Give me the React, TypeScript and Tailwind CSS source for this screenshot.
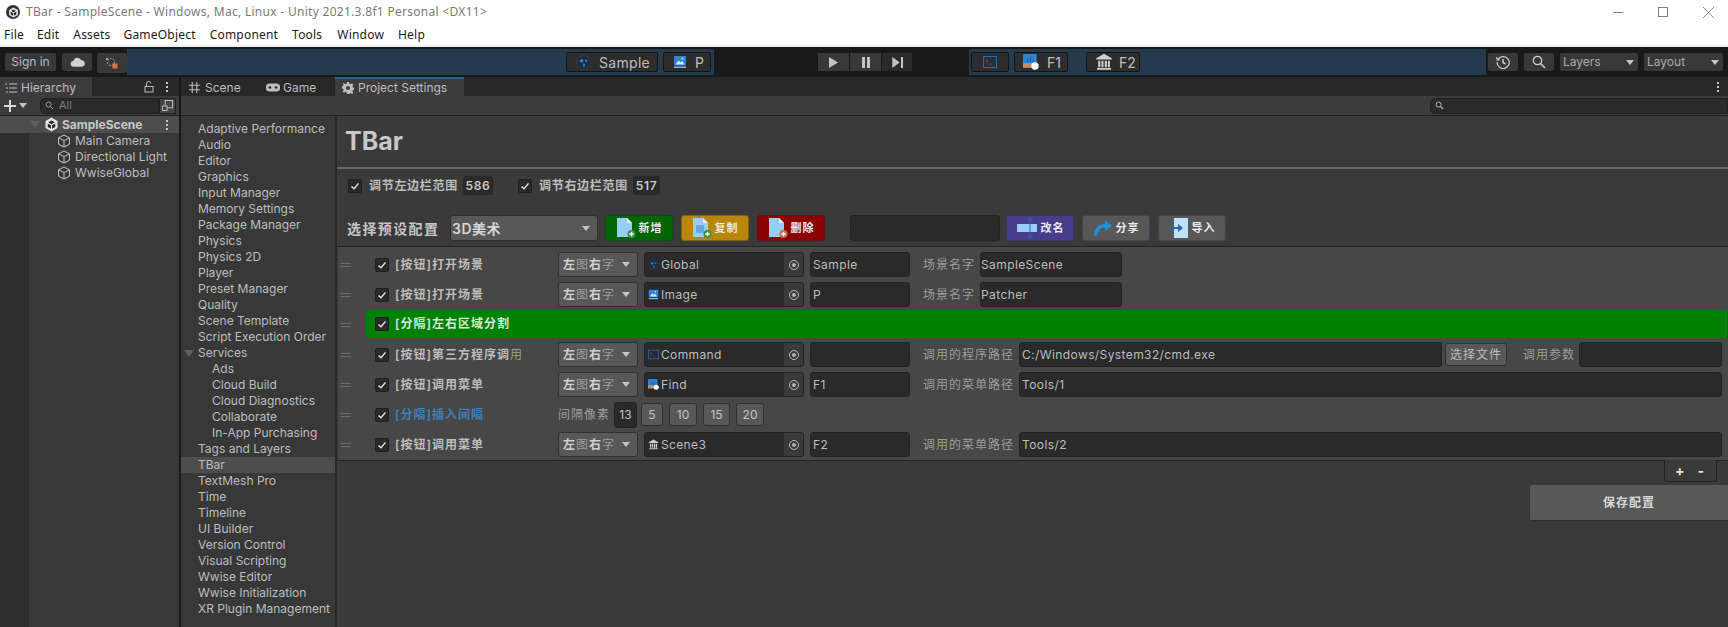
import React from "react";

const FONT = "font-['Inter','Noto_Sans_CJK_SC',sans-serif]";

function Cube({ className = "" }: { className?: string }) {
  return (
    <svg viewBox="0 0 14 14" className={`w-[14px] h-[14px] ${className}`} fill="none" stroke="#c4c4c4" strokeWidth="1">
      <path d="M7 1 L12.5 3.8 V10.2 L7 13 L1.5 10.2 V3.8 Z M1.5 3.8 L7 6.6 L12.5 3.8 M7 6.6 V13" />
    </svg>
  );
}

function UnityLogo({ size = 14 }: { size?: number }) {
  return (
    <svg viewBox="0 0 14 14" width={size} height={size}>
      <path d="M7 .5 12.6 3.7v6.6L7 13.5 1.4 10.3V3.7Z" fill="#e4e4e4" />
      <path d="M7 3.2 4 5 7 6.8 10 5ZM3.5 6v3.4L6.5 11V7.7ZM10.5 6v3.4L7.5 11V7.7Z" fill="#2a2a2a" />
    </svg>
  );
}

function Globe({ size = 14 }: { size?: number }) {
  return (
    <svg viewBox="0 0 14 14" width={size} height={size}>
      <circle cx="7" cy="7" r="6.5" fill="#1e2c3a" stroke="#3b3b3b" />
      <path d="M3.5 5 6 3.5 7 5.5 5.5 7.5 4 6.5ZM8.5 3.5 11 5.5 10 7 8.5 6ZM6.5 8 8.5 8.5 8 11.5 6.8 11Z" fill="#2a7fd6" />
    </svg>
  );
}

function ImageIcon({ size = 14 }: { size?: number }) {
  return (
    <svg viewBox="0 0 14 14" width={size} height={size}>
      <rect x="1" y="1" width="12" height="9.5" fill="#2f83d8" />
      <path d="M2.5 9.5 5.5 5.5 7.5 7.5 9 6 11.5 9.5Z" fill="#d9ecfb" />
      <circle cx="9.5" cy="3.5" r="1" fill="#d9ecfb" />
      <rect x="1" y="11.5" width="12" height="1.5" fill="#7fb6ea" />
    </svg>
  );
}

function Terminal({ size = 14 }: { size?: number }) {
  return (
    <svg viewBox="0 0 14 14" width={size} height={size} fill="none" stroke="#2467b5" strokeWidth="1">
      <rect x=".5" y="1.5" width="13" height="11" />
      <path d="M3 4.5 5 6.2 3 8M6.5 9h2" />
    </svg>
  );
}

function FindIcon({ size = 14 }: { size?: number }) {
  return (
    <svg viewBox="0 0 14 14" width={size} height={size}>
      <rect x="0" y="0" width="12" height="12" rx="1" fill="#2f83d8" />
      <rect x="0" y="8" width="12" height="4" fill="#c98a5e" />
      <path d="M4 7V4M6.5 7V2.5M9 7V5" stroke="#1b5a9e" />
      <circle cx="10.5" cy="10.5" r="3.2" fill="#ffffff" />
    </svg>
  );
}

function Bank({ size = 14 }: { size?: number }) {
  return (
    <svg viewBox="0 0 14 14" width={size} height={size} fill="#cfcfcf">
      <path d="M7 .5 13 4v1H1V4Z" />
      <path d="M2.5 6h1.6v5H2.5ZM5 6h1.6v5H5ZM7.6 6h1.6v5H7.6ZM10 6h1.6v5H10ZM1.5 11.7h11V13h-11Z" />
    </svg>
  );
}

function Check({ className = "" }: { className?: string }) {
  return (
    <span className={`w-[14px] h-[14px] shrink-0 flex items-center justify-center rounded-[2px] bg-[#2a2a2a] border border-[#1f1f1f] ${className}`}>
      <svg viewBox="0 0 10 10" className="w-[10px] h-[10px]" fill="none" stroke="#e4e4e4" strokeWidth="1.4">
        <path d="M1.5 5.5 4 7.8 8.5 2.4" />
      </svg>
    </span>
  );
}

function DocIcon({ badge, overlay }: { badge: string; overlay?: boolean }) {
  return (
    <svg viewBox="0 0 20 22" className="w-[20px] h-[22px] shrink-0">
      <path d="M1 1H11L16 6V20H1Z" fill="#99ccf7" />
      <path d="M11 1 16 6H11Z" fill="#e3f1fd" />
      {overlay && <rect x="4" y="8" width="8" height="8" fill="#6da6de" />}
      <circle cx="15.5" cy="17" r="4" fill={badge} />
      <path d="M13.2 17h4.6M15.5 14.8v4.4" stroke="#eef7ee" strokeWidth="1.5" />
    </svg>
  );
}

function ActionBtn({ bg, icon, label }: { bg: string; icon: React.ReactNode; label: string }) {
  return (
    <div className={`w-[68px] h-[26px] rounded-[3px] flex items-center justify-center gap-[3px] text-[11px] font-bold text-[#e8e8e8] border border-[#2a2a2a]/40 ${bg}`}>
      {icon}
      <span className="tracking-[1px]">{label}</span>
    </div>
  );
}

function Dots({ className = "" }: { className?: string }) {
  return (
    <span className={`flex flex-col gap-[2px] w-[2px] shrink-0 ${className}`}>
      <i className="block w-[2px] h-[2px] bg-[#c4c4c4]" />
      <i className="block w-[2px] h-[2px] bg-[#c4c4c4]" />
      <i className="block w-[2px] h-[2px] bg-[#c4c4c4]" />
    </span>
  );
}

function Arrow({ className = "" }: { className?: string }) {
  return <span className={`w-0 h-0 border-l-[4px] border-r-[4px] border-t-[5px] border-l-transparent border-r-transparent border-t-[#c4c4c4] shrink-0 ${className}`} />;
}

function TreeArrow({ className = "" }: { className?: string }) {
  return <span className={`w-0 h-0 border-l-[5px] border-r-[5px] border-t-[7px] border-l-transparent border-r-transparent border-t-[#5f5f5f] shrink-0 ${className}`} />;
}

function Handle() {
  return (
    <span className="w-[10px] ml-[3px] flex flex-col gap-[2px] shrink-0">
      <i className="block h-px bg-[#6a6a6a]" />
      <i className="block h-px bg-[#6a6a6a]" />
    </span>
  );
}

function Layout() {
  return (
    <div className="w-[80px] ml-[1px] h-[25px] shrink-0 rounded-[3px] bg-[#585858] border border-[#303030] flex items-center pl-[4px] pr-[7px] justify-between text-[12px] text-[#9c9c9c] tracking-[1px]">
      <span>
        <b className="font-semibold text-[#d0d0d0]">左</b>图<b className="font-semibold text-[#d0d0d0]">右</b>字
      </span>
      <Arrow />
    </div>
  );
}

function ObjField({ icon, name }: { icon: React.ReactNode; name: string }) {
  return (
    <div className="w-[160px] ml-[6px] h-[25px] shrink-0 rounded-[3px] bg-[#2a2a2a] border border-[#232323] flex items-center text-[12px] text-[#bdbdbd] overflow-hidden">
      <span className="w-[11px] ml-[3px] flex items-center justify-center shrink-0">{icon}</span>
      <span className="ml-[2px] flex-1 tracking-[0.35px]">{name}</span>
      <span className="w-[19px] h-full bg-[#3a3a3a] flex items-center justify-center shrink-0">
        <span className="w-[10px] h-[10px] rounded-full border border-[#b4b4b4] flex items-center justify-center">
          <i className="block w-[4px] h-[4px] rounded-full bg-[#b4b4b4]" />
        </span>
      </span>
    </div>
  );
}

function Input({ className, value = "" }: { className: string; value?: string }) {
  return (
    <div className={`h-[25px] shrink-0 rounded-[3px] bg-[#2a2a2a] border border-[#232323] flex items-center text-[12px] text-[#bdbdbd] tracking-[0.4px] ${className}`}>
      {value}
    </div>
  );
}

function RowLabel({ children, blue }: { children: React.ReactNode; blue?: boolean }) {
  return (
    <span className={`w-[162px] ml-[6px] shrink-0 text-[12px] font-semibold tracking-[1px] whitespace-nowrap ${blue ? "text-[#3f7fb5]" : "text-[#bcbcbc]"}`}>
      {children}
    </span>
  );
}

function SideLabel({ className, children }: { className: string; children: string }) {
  return <span className={`shrink-0 text-[12px] leading-[25px] text-[#9c9c9c] tracking-[1px] whitespace-nowrap ${className}`}>{children}</span>;
}

function Row({ children }: { children: React.ReactNode }) {
  return <div className="h-[30px] flex items-start pt-[2px]">{children}</div>;
}

function Lead({ label, blue }: { label: React.ReactNode; blue?: boolean }) {
  return (
    <div className="flex items-center h-[25px]">
      <Handle />
      <span className="w-[24px] shrink-0" />
      <Check />
      <RowLabel blue={blue}>{label}</RowLabel>
    </div>
  );
}

function GapBtn({ w, ml, t }: { w: string; ml: string; t: string }) {
  return (
    <div className={`${w} ${ml} h-[23px] mt-[1px] shrink-0 rounded-[3px] bg-[#585858] border border-[#303030] flex items-center justify-center text-[12px] text-[#c4c4c4]`}>
      {t}
    </div>
  );
}

const settings: [string, number][] = [
  ["Adaptive Performance", 0], ["Audio", 0], ["Editor", 0], ["Graphics", 0], ["Input Manager", 0], ["Memory Settings", 0],
  ["Package Manager", 0], ["Physics", 0], ["Physics 2D", 0], ["Player", 0], ["Preset Manager", 0], ["Quality", 0],
  ["Scene Template", 0], ["Script Execution Order", 0], ["Services", 2], ["Ads", 1], ["Cloud Build", 1], ["Cloud Diagnostics", 1],
  ["Collaborate", 1], ["In-App Purchasing", 1], ["Tags and Layers", 0], ["TBar", 3], ["TextMesh Pro", 0], ["Time", 0],
  ["Timeline", 0], ["UI Builder", 0], ["Version Control", 0], ["Visual Scripting", 0], ["Wwise Editor", 0], ["Wwise Initialization", 0],
  ["XR Plugin Management", 0],
];

function ToolBox({ className, children }: { className: string; children: React.ReactNode }) {
  return (
    <div className={`h-[20px] shrink-0 rounded-[2px] bg-[#2d2d2d] border border-[#141414] flex items-center text-[14px] text-[#bdbdbd] ${className}`}>
      {children}
    </div>
  );
}

export default function App() {
  return (
    <div className={`w-[1728px] h-[627px] overflow-hidden flex flex-col bg-[#191919] ${FONT}`}>
      {/* title bar */}
      <div className="h-[24px] bg-white flex items-center shrink-0 font-['Noto_Sans',sans-serif]">
        <span className="ml-[6px] mr-[6px] w-[14px] h-[14px] rounded-full bg-[#333] flex items-center justify-center">
          <UnityLogo size={11} />
        </span>
        <span className="text-[12px] text-[#7a7a7a] tracking-[0.29px] whitespace-pre">TBar - SampleScene - Windows, Mac, Linux - Unity 2021.3.8f1 Personal &lt;DX11&gt;</span>
        <span className="flex-1" />
        <span className="w-[10px] h-px bg-[#808080]" />
        <span className="w-[10px] h-[10px] ml-[35px] border border-[#808080]" />
        <svg viewBox="0 0 10 10" className="w-[11px] h-[11px] ml-[35px] mr-[14px]" stroke="#808080" strokeWidth="0.8">
          <path d="M0 0 10 10M10 0 0 10" />
        </svg>
      </div>
      {/* menu */}
      <div className="h-[21px] bg-white flex items-center shrink-0 text-[12px] tracking-[0.2px] text-[#1a1a1a] font-['Noto_Sans',sans-serif]">
        <span className="ml-[4px]">File</span>
        <span className="ml-[13px]">Edit</span>
        <span className="ml-[14px]">Assets</span>
        <span className="ml-[13px]">GameObject</span>
        <span className="ml-[14px]">Component</span>
        <span className="ml-[14px]">Tools</span>
        <span className="ml-[15px]">Window</span>
        <span className="ml-[14px]">Help</span>
      </div>
      <div className="h-[2px] bg-[#f0f0f0] shrink-0" />
      {/* toolbar */}
      <div className="h-[30px] bg-[#191919] flex items-center shrink-0">
        <div className="ml-[5px] w-[51px] h-[18px] bg-[#383838] rounded-[2px] flex items-center justify-center text-[12px] text-[#bdbdbd]">Sign in</div>
        <div className="ml-[6px] w-[30px] h-[18px] bg-[#383838] rounded-[2px] flex items-center justify-center">
          <svg viewBox="0 0 16 10" className="w-[15px] h-[10px]" fill="#d0d0d0">
            <path d="M4 10a3 3 0 0 1-.4-6 4.5 4.5 0 0 1 8.5-.8A3.4 3.4 0 0 1 12.5 10Z" />
          </svg>
        </div>
        <div className="ml-[5px] w-[30px] h-[20px] mt-[2px] bg-[#383838] rounded-[2px] flex items-center justify-center">
          <svg viewBox="0 0 14 14" className="w-[14px] h-[14px]">
            <circle cx="6" cy="6" r="3.5" fill="none" stroke="#c4c4c4" strokeDasharray="1.5 1.5" />
            <circle cx="2" cy="3" r="1" fill="#c4c4c4" />
            <rect x="7.5" y="7.5" width="5" height="5" fill="#d9743a" />
          </svg>
        </div>
        <div className="w-[587px] h-[26px] bg-[#253a4f] flex items-center">
          <ToolBox className="ml-[439px] w-[92px] pl-[9px]">
            <Globe size={15} />
            <span className="ml-[8px] tracking-[0.3px]">Sample</span>
          </ToolBox>
          <ToolBox className="ml-[5px] w-[48px] pl-[9px]">
            <ImageIcon />
            <span className="ml-[8px]">P</span>
          </ToolBox>
        </div>
        <div className="ml-[104px] flex h-[18px]">
          <div className="w-[32px] bg-[#383838] border-r border-[#191919] flex items-center justify-center">
            <svg viewBox="0 0 10 12" className="w-[9px] h-[11px]" fill="#c4c4c4"><path d="M0 0 10 6 0 12Z" /></svg>
          </div>
          <div className="w-[32px] bg-[#383838] border-r border-[#191919] flex items-center justify-center gap-[2px]">
            <i className="block w-[3px] h-[11px] bg-[#c4c4c4]" />
            <i className="block w-[3px] h-[11px] bg-[#c4c4c4]" />
          </div>
          <div className="w-[30px] bg-[#2a2a2a] flex items-center justify-center gap-[1px]">
            <svg viewBox="0 0 8 12" className="w-[8px] h-[11px]" fill="#c4c4c4"><path d="M0 0 8 6 0 12Z" /></svg>
            <i className="block w-[2px] h-[11px] bg-[#c4c4c4]" />
          </div>
        </div>
        <div className="ml-[57px] w-[517px] h-[26px] bg-[#253a4f] flex items-center">
          <ToolBox className="ml-[2px] w-[38px] justify-center"><Terminal /></ToolBox>
          <ToolBox className="ml-[5px] w-[54px] pl-[8px]">
            <FindIcon size={16} />
            <span className="ml-[8px]">F1</span>
          </ToolBox>
          <ToolBox className="ml-[18px] w-[54px] pl-[8px]">
            <Bank size={18} />
            <span className="ml-[6px]">F2</span>
          </ToolBox>
        </div>
        <div className="ml-[2px] w-[30px] h-[18px] bg-[#383838] rounded-[2px] flex items-center justify-center">
          <svg viewBox="0 0 14 14" className="w-[14px] h-[14px]" fill="none" stroke="#d0d0d0" strokeWidth="1.2">
            <path d="M2.2 4.2A6 6 0 1 1 1.2 7M1 2v3h3" />
            <path d="M7 4v3.5L9.5 9" strokeWidth="1.5" />
          </svg>
        </div>
        <div className="ml-[6px] w-[30px] h-[18px] bg-[#383838] rounded-[2px] flex items-center justify-center">
          <svg viewBox="0 0 14 14" className="w-[14px] h-[14px]" fill="none" stroke="#d0d0d0" strokeWidth="1.2">
            <circle cx="5.5" cy="5.5" r="4.2" />
            <path d="M8.5 8.5 13 13" strokeWidth="1.6" />
          </svg>
        </div>
        <div className="ml-[6px] w-[78px] h-[18px] bg-[#383838] rounded-[2px] flex items-center justify-between pl-[3px] pr-[4px] text-[12px] text-[#a8a8a8]">
          Layers<Arrow />
        </div>
        <div className="ml-[6px] w-[79px] h-[18px] bg-[#383838] rounded-[2px] flex items-center justify-between pl-[3px] pr-[4px] text-[12px] text-[#a8a8a8]">
          Layout<Arrow />
        </div>
      </div>

      {/* main */}
      <div className="flex-1 flex gap-[2px] min-h-0">
        {/* hierarchy */}
        <div className="w-[179px] flex flex-col shrink-0 bg-[#383838]">
          <div className="h-[19px] bg-[#282828] flex items-center shrink-0">
            <div className="w-[92px] h-full bg-[#3c3c3c] flex items-center text-[12px] text-[#bdbdbd] pt-[2px]">
              <svg viewBox="0 0 12 10" className="w-[12px] h-[10px] ml-[5px] mr-[4px]" stroke="#bdbdbd" fill="none">
                <path d="M0 1h2M4 1h8M1 5h2M4 5h8M1 9h2M4 9h8" />
              </svg>
              Hierarchy
            </div>
            <svg viewBox="0 0 10 12" className="w-[10px] h-[12px] ml-[52px]" fill="none" stroke="#bdbdbd">
              <rect x="1" y="5.5" width="8" height="5.5" />
              <path d="M2.5 5.5V3a2.2 2.2 0 0 1 4.4-.6" />
            </svg>
            <Dots className="ml-[12px]" />
          </div>
          <div className="h-[20px] bg-[#3c3c3c] border-b border-[#212121] flex items-center shrink-0">
            <svg viewBox="0 0 12 12" className="w-[12px] h-[12px] ml-[4px]" stroke="#d8d8d8" strokeWidth="2">
              <path d="M0 6h12M6 0v12" />
            </svg>
            <Arrow className="ml-[3px]" />
            <div className="ml-[13px] w-[119px] h-[16px] rounded-l-[5px] bg-[#2a2a2a] border border-[#212121] flex items-center text-[11px] text-[#7a7a7a]">
              <svg viewBox="0 0 10 10" className="w-[9px] h-[9px] ml-[4px] mr-[5px]" stroke="#a0a0a0" fill="none">
                <circle cx="4" cy="4" r="2.8" />
                <path d="M6 6 9 9" />
              </svg>
              All
            </div>
            <div className="w-[17px] h-[16px] bg-[#444] border border-[#212121] flex items-center justify-center">
              <svg viewBox="0 0 12 12" className="w-[11px] h-[11px]" fill="none" stroke="#c4c4c4">
                <rect x="3.5" y=".5" width="8" height="8" />
                <rect x=".5" y="6.5" width="5" height="5" fill="#444" />
              </svg>
            </div>
          </div>
          <div className="flex-1 flex min-h-0">
            <div className="w-[29px] bg-[#2e2e2e] shrink-0" />
            <div className="flex-1 flex flex-col">
              <div className="h-[17px] -ml-[29px] bg-[#4d4d4d] flex items-center text-[12px] font-bold text-[#c8c8c8]">
                <TreeArrow className="ml-[30px] mr-[4px]" />
                <UnityLogo size={15} />
                <span className="ml-[3px] flex-1">SampleScene</span>
                <Dots className="mr-[11px]" />
              </div>
              {["Main Camera", "Directional Light", "WwiseGlobal"].map((n) => (
                <div key={n} className="h-[16px] flex items-center text-[12px] text-[#bdbdbd]">
                  <Cube className="ml-[28px]" />
                  <span className="ml-[4px]">{n}</span>
                </div>
              ))}
            </div>
          </div>
        </div>
        {/* right */}
        <div className="flex-1 flex flex-col min-w-0 bg-[#383838]">
          <div className="h-[19px] bg-[#282828] flex items-center shrink-0 text-[12px] text-[#bdbdbd]">
            <svg viewBox="0 0 12 12" className="w-[11px] h-[11px] ml-[8px] mt-[2px]" stroke="#bdbdbd" strokeWidth="1.2">
              <path d="M3.5 0v12M8.5 0v12M0 3.5h12M0 8.5h12" />
            </svg>
            <span className="ml-[5px] w-[61px] mt-[2px]">Scene</span>
            <svg viewBox="0 0 16 10" className="w-[14px] h-[9px] mt-[2px]">
              <rect width="16" height="9" y=".5" rx="4" fill="#bdbdbd" />
              <circle cx="4.5" cy="5" r="1.5" fill="#282828" />
              <circle cx="11.5" cy="5" r="1.5" fill="#282828" />
            </svg>
            <span className="ml-[3px] w-[52px] mt-[2px]">Game</span>
            <div className="w-[129px] h-full bg-[#3c3c3c] border-t-2 border-[#2c5d87] flex items-center">
              <svg viewBox="0 0 12 12" className="w-[12px] h-[12px] ml-[7px] mr-[4px]" fill="#bdbdbd">
                <path d="M5 0h2l.3 1.7 1.3.6L10 1.3l1.4 1.4-1 1.4.6 1.3 1.7.3v2l-1.7.3-.6 1.3 1 1.4-1.4 1.4-1.4-1-1.3.6L7 12H5l-.3-1.7-1.3-.6-1.4 1L.6 9.3l1-1.4L1 6.6-.7 6.3v-2L1 4l.6-1.3-1-1.4L2 1.3l1.4 1 1.3-.6Z" />
                <circle cx="6" cy="6" r="2" fill="#3c3c3c" />
              </svg>
              Project Settings
            </div>
            <span className="flex-1" />
            <Dots className="mr-[9px]" />
          </div>
          <div className="h-[20px] bg-[#3c3c3c] border-b border-[#212121] flex items-center justify-end shrink-0">
            <div className="w-[298px] h-[16px] rounded-l-[5px] bg-[#2a2a2a] border border-[#212121] flex items-center">
              <svg viewBox="0 0 10 10" className="w-[9px] h-[9px] ml-[4px]" stroke="#c4c4c4" fill="none">
                <circle cx="4" cy="4" r="2.8" />
                <path d="M6 6 9 9" strokeWidth="1.4" />
              </svg>
            </div>
          </div>
          <div className="flex-1 flex min-h-0">
            {/* settings list */}
            <div className="w-[154px] shrink-0 pt-[5px] text-[12px] text-[#bdbdbd] border-r-2 border-[#282828] box-content">
              {settings.map(([n, k]) => (
                <div key={n} className={`h-[16px] flex items-center whitespace-nowrap ${k === 3 ? "bg-[#4d4d4d]" : ""} ${k === 1 ? "pl-[31px]" : "pl-[17px]"}`}>
                  {k === 2 && <TreeArrow className="-ml-[14px] mr-[4px]" />}
                  {n}
                </div>
              ))}
            </div>
            {/* content */}
            <div className="flex-1 min-w-0 flex flex-col bg-[#3a3a3a]">
              <div className="h-[51px] border-b-2 border-[#666666] flex items-center pl-[8px] text-[25px] font-bold text-[#c8c8c8] shrink-0 box-content -mb-px">TBar</div>
              <div className="mt-[8px] h-[19px] flex items-center text-[12px] text-[#bcbcbc] font-semibold tracking-[0.7px] shrink-0">
                <Check className="ml-[11px]" />
                <span className="ml-[7px] w-[94px] whitespace-nowrap">调节左边栏范围</span>
                <span className="w-[30px] h-[19px] rounded-[2px] bg-[#2a2a2a] flex items-center justify-center text-[#c8c8c8]">586</span>
                <Check className="ml-[25px]" />
                <span className="ml-[7px] w-[94px] whitespace-nowrap">调节右边栏范围</span>
                <span className="w-[27px] h-[19px] rounded-[2px] bg-[#2a2a2a] flex items-center justify-center text-[#c8c8c8]">517</span>
              </div>
              <div className="mt-[20px] h-[26px] flex items-center shrink-0">
                <span className="ml-[10px] w-[103px] text-[14px] font-semibold text-[#c4c4c4] tracking-[1.4px] whitespace-nowrap">选择预设配置</span>
                <div className="w-[148px] h-[26px] rounded-[3px] bg-[#585858] border border-[#303030] flex items-center justify-between pl-[1px] pr-[7px] text-[14px] font-semibold text-[#d4d4d4] tracking-[0.5px]">
                  3D美术<Arrow />
                </div>
                <div className="ml-[7px] flex gap-[8px]">
                  <ActionBtn bg="bg-[#006400]" label="新增" icon={<DocIcon badge="#3c8f4a" />} />
                  <ActionBtn bg="bg-[#b8860b]" label="复制" icon={<DocIcon badge="#3c8f4a" overlay />} />
                  <ActionBtn bg="bg-[#8b0000]" label="删除" icon={<DocIcon badge="#c96a4a" />} />
                </div>
                <div className="ml-[25px] w-[150px] h-[26px] rounded-[3px] bg-[#2a2a2a] border border-[#232323]" />
                <div className="ml-[6px] flex gap-[8px]">
                  <ActionBtn
                    bg="bg-[#483d8b]"
                    label="改名"
                    icon={
                      <svg viewBox="0 0 22 20" className="w-[22px] h-[20px] shrink-0">
                        <rect x="1" y="6" width="20" height="8" fill="#99ccf7" />
                        <path d="M14 1v18M11 1h6M11 19h6" stroke="#2467b5" fill="none" />
                      </svg>
                    }
                  />
                  <ActionBtn
                    bg="bg-[#585858]"
                    label="分享"
                    icon={
                      <svg viewBox="0 0 20 18" className="w-[20px] h-[18px] shrink-0">
                        <path d="M1 17C1 9 6 5 12 5V1L19 6.5 12 12V8.5C8 8.5 5 11 4 17Z" fill="#1f8fd6" />
                      </svg>
                    }
                  />
                  <ActionBtn
                    bg="bg-[#585858]"
                    label="导入"
                    icon={
                      <svg viewBox="0 0 20 20" className="w-[20px] h-[20px] shrink-0">
                        <rect x="5" y="0" width="14" height="20" fill="#bfe0fb" />
                        <path d="M0 9h9V6l5 4-5 4v-3H0Z" fill="#2467b5" />
                      </svg>
                    }
                  />
                </div>
              </div>
              {/* list */}
              <div className="mt-[5px] ml-px h-[215px] bg-[#474747] border-y border-[#232323] shrink-0 pt-[3px]">
                <Row>
                  <Lead label="[按钮]打开场景" />
                  <Layout />
                  <ObjField icon={<Globe size={11} />} name="Global" />
                  <Input className="ml-[6px] w-[100px] pl-[2px]" value="Sample" />
                  <SideLabel className="ml-[13px]">场景名字</SideLabel>
                  <Input className="ml-[5px] w-[142px]" value="SampleScene" />
                </Row>
                <Row>
                  <Lead label="[按钮]打开场景" />
                  <Layout />
                  <ObjField icon={<ImageIcon size={11} />} name="Image" />
                  <Input className="ml-[6px] w-[100px] pl-[2px]" value="P" />
                  <SideLabel className="ml-[13px]">场景名字</SideLabel>
                  <Input className="ml-[5px] w-[142px]" value="Patcher" />
                </Row>
                <div className="h-[30px] flex items-start">
                  <div className="h-[25px] flex items-center mt-[2px] shrink-0 w-[28px]">
                    <Handle />
                  </div>
                  <div className="w-[1361px] h-[28px] bg-[#008000] flex items-center shrink-0">
                    <Check className="ml-[9px]" />
                    <span className="ml-[6px] text-[12px] font-semibold tracking-[1px] text-[#d8e8d8]">[分隔]左右区域分割</span>
                  </div>
                </div>
                <Row>
                  <Lead label={<>[按钮]第三方程序调<span className="font-normal text-[#9c9c9c]">用</span></>} />
                  <Layout />
                  <ObjField icon={<Terminal size={11} />} name="Command" />
                  <Input className="ml-[6px] w-[100px]" />
                  <SideLabel className="ml-[13px]">调用的程序路径</SideLabel>
                  <Input className="ml-[5px] w-[423px] pl-[2px]" value="C:/Windows/System32/cmd.exe" />
                  <div className="ml-[3px] mt-[1px] w-[62px] h-[23px] shrink-0 rounded-[3px] bg-[#585858] border border-[#303030] flex items-center justify-center text-[12px] text-[#bcbcbc] tracking-[1px]">选择文件</div>
                  <SideLabel className="ml-[16px]">调用参数</SideLabel>
                  <Input className="ml-[4px] w-[143px]" />
                </Row>
                <Row>
                  <Lead label="[按钮]调用菜单" />
                  <Layout />
                  <ObjField icon={<FindIcon size={11} />} name="Find" />
                  <Input className="ml-[6px] w-[100px] pl-[2px]" value="F1" />
                  <SideLabel className="ml-[13px]">调用的菜单路径</SideLabel>
                  <Input className="ml-[5px] w-[703px] pl-[2px]" value="Tools/1" />
                </Row>
                <Row>
                  <Lead blue label="[分隔]插入间隔" />
                  <SideLabel className="ml-[1px]">间隔像素</SideLabel>
                  <div className="ml-[4px] w-[23px] h-[26px] shrink-0 rounded-[3px] bg-[#2a2a2a] border border-[#232323] flex items-center justify-center text-[12px] text-[#c4c4c4]">13</div>
                  <GapBtn w="w-[22px]" ml="ml-[4px]" t="5" />
                  <GapBtn w="w-[28px]" ml="ml-[6px]" t="10" />
                  <GapBtn w="w-[27px]" ml="ml-[6px]" t="15" />
                  <GapBtn w="w-[28px]" ml="ml-[6px]" t="20" />
                </Row>
                <Row>
                  <Lead label="[按钮]调用菜单" />
                  <Layout />
                  <ObjField icon={<Bank size={11} />} name="Scene3" />
                  <Input className="ml-[6px] w-[100px] pl-[2px]" value="F2" />
                  <SideLabel className="ml-[13px]">调用的菜单路径</SideLabel>
                  <Input className="ml-[5px] w-[703px] pl-[2px]" value="Tools/2" />
                </Row>
              </div>
              <div className="flex justify-end pr-[11px] shrink-0">
                <div className="w-[53px] h-[22px] -mt-px bg-[#3a3a3a] border border-t-0 border-[#232323] rounded-b-[3px] flex items-center text-[14px] font-bold text-[#e0e0e0]">
                  <span className="ml-[10px]">+</span>
                  <span className="ml-[13px]">-</span>
                </div>
              </div>
              <div className="mt-[3px] flex justify-end shrink-0">
                <div className="w-[198px] h-[36px] bg-[#585858] rounded-l-[2px] border-b border-[#303030] flex items-center justify-center text-[12px] font-bold text-[#d8d8d8] tracking-[1px]">保存配置</div>
              </div>
            </div>
          </div>
        </div>
      </div>
    </div>
  );
}
